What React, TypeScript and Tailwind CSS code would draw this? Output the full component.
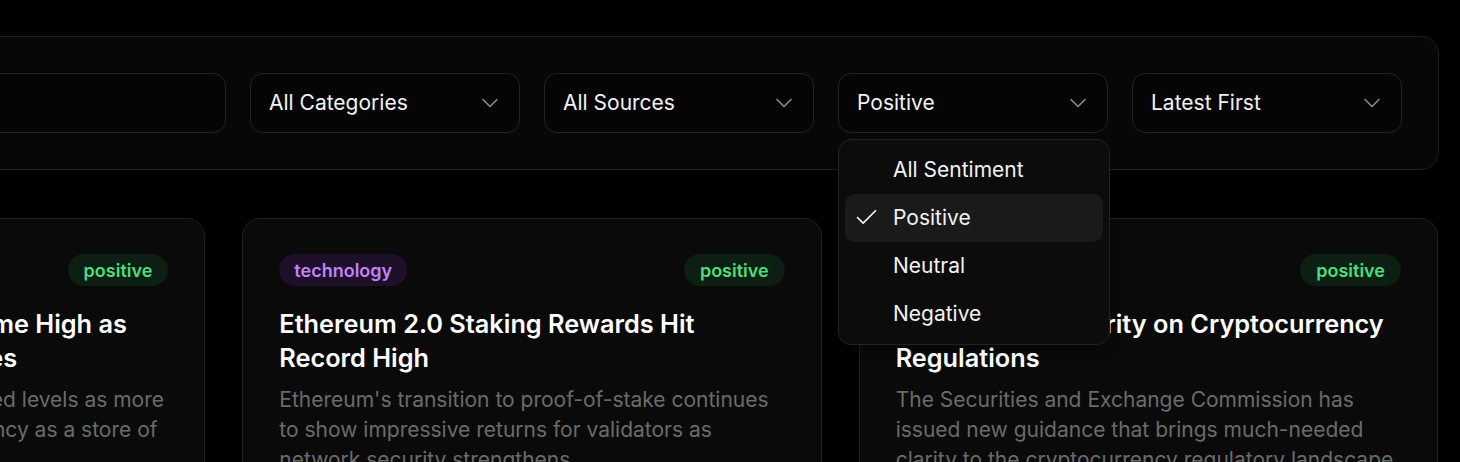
import React from "react";

const Chevron = () => (
  <svg width="28" height="28" viewBox="0 0 24 24" fill="none" stroke="#8a8a8a" strokeWidth="1.4" strokeLinecap="round" strokeLinejoin="round">
    <path d="m6 9 6 6 6-6" />
  </svg>
);

const Check = () => (
  <svg width="27" height="27" viewBox="0 0 24 24" fill="none" stroke="#f5f5f5" strokeWidth="1.5" strokeLinecap="round" strokeLinejoin="round">
    <path d="M20 6 9 17l-5-5" />
  </svg>
);

function Select({ label, open }: { label: string; open?: boolean }) {
  return (
    <div className="relative w-[270px] shrink-0">
      <div className="flex h-[60px] items-center justify-between rounded-[13px] border border-[#222222] bg-[#050505] pl-[18px] pr-[15px]">
        <span className="text-[21px] text-[#f2f2f2]">{label}</span>
        <Chevron />
      </div>
      {open && (
        <div className="absolute left-0 top-[66px] z-10 w-[272px] rounded-[13px] border border-[#222222] bg-[#0c0c0c] p-[6px] shadow-lg">
          {["All Sentiment", "Positive", "Neutral", "Negative"].map((o) => (
            <div
              key={o}
              className={`relative flex h-[48px] items-center rounded-[10px] pl-[48px] text-[21px] text-[#f2f2f2] ${
                o === "Positive" ? "bg-[#1a1a1a]" : ""
              }`}
            >
              {o === "Positive" && (
                <span className="absolute left-[8px] top-[10px]">
                  <Check />
                </span>
              )}
              {o}
            </div>
          ))}
        </div>
      )}
    </div>
  );
}

type Card = {
  cat: string;
  catCls: string;
  title: string;
  desc: string;
};

const cards: Card[] = [
  {
    cat: "market",
    catCls: "bg-[#0e1a2b] text-[#60a5fa]",
    title: "Bitcoin Reaches New All-Time High as Institutional Adoption Surges",
    desc: "Bitcoin has reached unprecedented levels as more institutions now view cryptocurrency as a store of value amid economic uncertainty.",
  },
  {
    cat: "technology",
    catCls: "bg-[#1e1029] text-[#c084fc]",
    title: "Ethereum 2.0 Staking Rewards Hit Record High",
    desc: "Ethereum's transition to proof-of-stake continues to show impressive returns for validators as network security strengthens.",
  },
  {
    cat: "regulation",
    catCls: "bg-[#2a1f08] text-[#facc15]",
    title: "SEC Provides Clarity on Cryptocurrency Regulations",
    desc: "The Securities and Exchange Commission has issued new guidance that brings much-needed clarity to the cryptocurrency regulatory landscape.",
  },
];

export default function App() {
  return (
    <div className="h-[462px] overflow-hidden bg-black font-['Inter','Noto_Sans',sans-serif]">
      <div className="ml-[-374px] w-[1812px] pt-[36px]">
        <div className="ml-[1px] mr-[-1px] flex gap-[24px] rounded-[18px] border border-[#1f1f1f] bg-[#070707] p-[36px]">
          <div className="h-[60px] flex-1 rounded-[13px] border border-[#222222] bg-[#050505]" />
          <Select label="All Categories" />
          <Select label="All Sources" />
          <Select label="Positive" open />
          <Select label="Latest First" />
        </div>
        <div className="mt-[48px] grid grid-cols-3 gap-[37px]">
          {cards.map((c) => (
            <div key={c.title} className="h-[400px] rounded-[18px] border border-[#1f1f1f] bg-[#0a0a0a] px-[36px] pt-[35px]">
              <div className="flex items-center justify-between">
                <span className={`flex h-[32px] items-center rounded-full px-[15px] text-[18px] font-semibold ${c.catCls}`}>
                  {c.cat}
                </span>
                <span className="flex h-[32px] items-center rounded-full bg-[#0c1f12] px-[16px] text-[18px] font-semibold text-[#4ade80]">
                  positive
                </span>
              </div>
              <h3 className="mt-[21px] text-[25.3px] font-semibold leading-[34px] text-white">{c.title}</h3>
              <p className="mt-[10px] text-[21px] leading-[30px] text-[#6b6b6b]">{c.desc}</p>
            </div>
          ))}
        </div>
      </div>
    </div>
  );
}
